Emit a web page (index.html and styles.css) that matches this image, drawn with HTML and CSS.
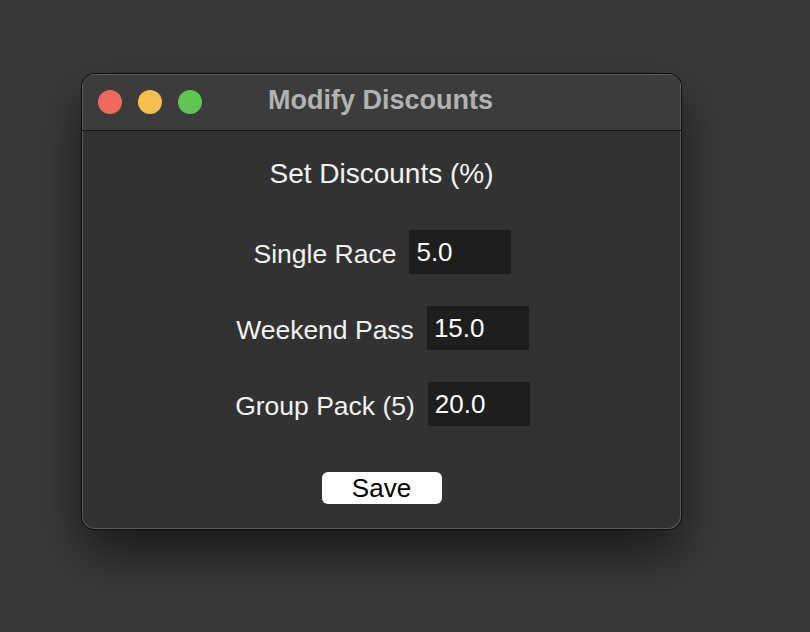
FILE: index.html
```html
<!DOCTYPE html>
<html>
<head>
<meta charset="utf-8">
<link rel="stylesheet" href="styles.css">
</head>
<body>
<div class="window">
  <div class="titlebar">
    <div class="lights">
      <span class="light red"></span>
      <span class="light yellow"></span>
      <span class="light green"></span>
    </div>
    <div class="title">Modify Discounts</div>
    <div></div>
  </div>
  <div class="content">
    <div class="heading">Set Discounts (%)</div>
    <div class="row"><label class="label">Single Race</label><input class="entry" type="text" value="5.0"></div>
    <div class="row"><label class="label">Weekend Pass</label><input class="entry" type="text" value="15.0"></div>
    <div class="row"><label class="label">Group Pack (5)</label><input class="entry" type="text" value="20.0"></div>
    <button class="save">Save</button>
  </div>
</div>
</body>
</html>
```
FILE: styles.css
```css
html, body {
  margin: 0;
  height: 100%;
}
body {
  background: #393939;
  padding: 74px 0 0 82px;
  box-sizing: border-box;
  font-family: "Liberation Sans", Arial, sans-serif;
  overflow: hidden;
}
.window {
  width: 599px;
  height: 455px;
  box-sizing: border-box;
  border-radius: 13px;
  background: #323232;
  box-shadow: 0 0 0 1px #0c0c0c, inset 0 0 0 1px #5c5c5c, 0 24px 50px rgba(0,0,0,0.55);
  overflow: hidden;
  display: flex;
  flex-direction: column;
}
.titlebar {
  height: 56px;
  flex: none;
  background: #3c3c3c;
  border-bottom: 1px solid #161616;
  box-shadow: inset 1px 1px 0 #5c5c5c, inset -1px 0 0 #5c5c5c;
  display: grid;
  grid-template-columns: 1fr auto 1fr;
  align-items: center;
}
.lights {
  display: flex;
  gap: 16px;
  padding-left: 16px;
}
.light {
  width: 24px;
  height: 24px;
  border-radius: 50%;
}
.red { background: #ee6a5f; }
.yellow { background: #f5bf4f; }
.green { background: #61c554; }
.title {
  font-weight: bold;
  font-size: 27px;
  color: #b2b2b2;
  position: relative;
  top: -2px;
  left: -1px;
}
.content {
  display: flex;
  flex-direction: column;
  align-items: center;
  padding-top: 27px;
}
.heading {
  font-size: 28px;
  line-height: 32px;
  color: #f2f2f2;
  margin-bottom: 40px;
}
.row {
  display: flex;
  align-items: center;
  gap: 13px;
  margin-bottom: 32px;
  padding-left: 2px;
}
.label {
  font-size: 26.5px;
  color: #f2f2f2;
  padding-top: 4px;
}
.entry {
  width: 102px;
  height: 44px;
  box-sizing: border-box;
  border: none;
  outline: none;
  background: #1e1e1e;
  color: #ffffff;
  font-family: "Liberation Sans", Arial, sans-serif;
  font-size: 26px;
  padding: 0 0 0 7px;
  margin: 0;
}
.save {
  margin-top: 14px;
  width: 120px;
  height: 32px;
  border: none;
  border-radius: 6px;
  background: #ffffff;
  color: #000;
  font-family: "Liberation Sans", Arial, sans-serif;
  font-size: 26px;
  line-height: 32px;
  padding: 0;
}
```
